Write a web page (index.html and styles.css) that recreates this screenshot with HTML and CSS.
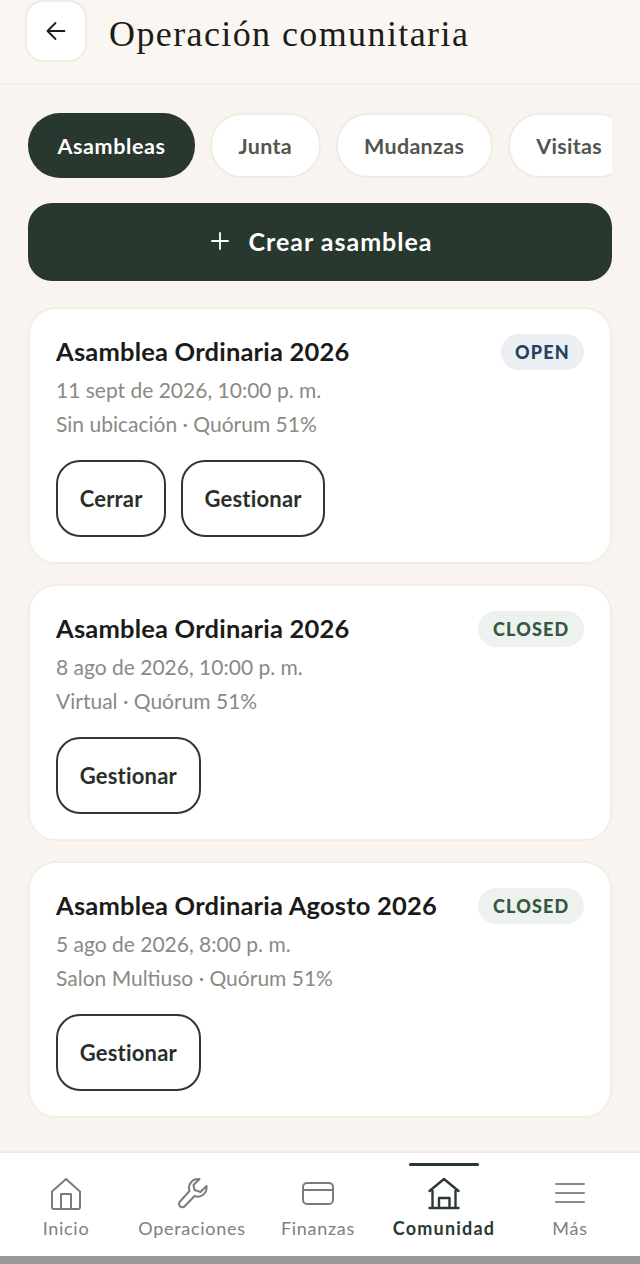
FILE: index.html
```html
<!DOCTYPE html>
<html>
<head>
    <title>Operación comunitaria</title>
    <meta name="viewport" content="width=device-width" />
    <link rel="stylesheet" href="styles.css">
</head>
<body>

<header class="top-bar">
    <button class="back-btn">
        <svg width="24" height="24" viewBox="0 0 24 24" fill="none" stroke="#1c1c1a" stroke-width="1.8" stroke-linecap="round" stroke-linejoin="round"><path d="M20.500 12H4M11.500 4 3.500 12l8 8"/></svg>
    </button>
    <h1>Operación comunitaria</h1>
</header>

<main class="content">
    <div class="tabs">
        <div class="tab active">Asambleas</div>
        <div class="tab">Junta</div>
        <div class="tab">Mudanzas</div>
        <div class="tab">Visitas</div>
    </div>

    <button class="create-btn">
        <svg width="20" height="20" viewBox="0 0 20 20" fill="none" stroke="#fff" stroke-width="1.8" stroke-linecap="round"><path d="M10 2v16M2 10h16"/></svg>
        <span>Crear asamblea</span>
    </button>

    <section class="card">
        <div class="card-head">
            <h2>Asamblea Ordinaria 2026</h2>
            <span class="badge open">OPEN</span>
        </div>
        <p class="meta date">11 sept de 2026, 10:00 p. m.</p>
        <p class="meta">Sin ubicación · Quórum 51%</p>
        <div class="actions">
            <button class="outline-btn">Cerrar</button>
            <button class="outline-btn">Gestionar</button>
        </div>
    </section>

    <section class="card">
        <div class="card-head">
            <h2>Asamblea Ordinaria 2026</h2>
            <span class="badge closed">CLOSED</span>
        </div>
        <p class="meta date">8 ago de 2026, 10:00 p. m.</p>
        <p class="meta">Virtual · Quórum 51%</p>
        <div class="actions">
            <button class="outline-btn">Gestionar</button>
        </div>
    </section>

    <section class="card">
        <div class="card-head">
            <h2>Asamblea Ordinaria Agosto 2026</h2>
            <span class="badge closed">CLOSED</span>
        </div>
        <p class="meta date">5 ago de 2026, 8:00 p. m.</p>
        <p class="meta">Salon Multiuso · Quórum 51%</p>
        <div class="actions">
            <button class="outline-btn">Gestionar</button>
        </div>
    </section>
</main>

<nav class="bottom-nav">
    <div class="nav-item">
        <svg width="34" height="34" viewBox="0 0 34 34" fill="none" stroke="#7b7b78" stroke-width="2" stroke-linecap="round" stroke-linejoin="round"><path d="M3 15.500 17 3l14 12.500V31a2 2 0 0 1-2 2H5a2 2 0 0 1-2-2z"/><path d="M12 33V18h10v15"/></svg>
        <span>Inicio</span>
    </div>
    <div class="nav-item">
        <svg width="34" height="34" viewBox="0 0 34 34" fill="none" stroke="#7b7b78" stroke-width="2" stroke-linecap="round" stroke-linejoin="round"><path d="M23 3a9 9 0 0 0-8.500 12L5 25.500a3.300 3.300 0 0 0 4.700 4.700L19.500 20A9 9 0 0 0 31.500 10l-6 6-6-2-1-5 6-6a9 9 0 0 0-1.500 0z"/></svg>
        <span>Operaciones</span>
    </div>
    <div class="nav-item">
        <svg width="34" height="34" viewBox="0 0 34 34" fill="none" stroke="#7b7b78" stroke-width="2" stroke-linecap="round" stroke-linejoin="round"><rect x="2" y="7" width="30" height="21" rx="4"/><path d="M2 14h30"/></svg>
        <span>Finanzas</span>
    </div>
    <div class="nav-item current">
        <svg width="34" height="34" viewBox="0 0 34 34" fill="none" stroke="#2a3a30" stroke-width="2.400" stroke-linecap="round" stroke-linejoin="round"><path d="M2.500 15 17 3l14.500 12M5.500 12.500V32M28.500 12.500V32M2.500 32h29M12 32V22h10.500v10"/></svg>
        <span>Comunidad</span>
    </div>
    <div class="nav-item">
        <svg width="34" height="34" viewBox="0 0 34 34" fill="none" stroke="#8b8b84" stroke-width="2" stroke-linecap="round"><path d="M3 8h28M3 17h28M3 26h28"/></svg>
        <span>Más</span>
    </div>
</nav>

<div class="system-bar"></div>

</body>
</html>
```

FILE: styles.css
```css
html, body {
    margin: 0;
    height: 1264px;
    overflow: hidden;
}

body {
    display: flex;
    flex-direction: column;
    background: #f9f4ef;
    font-family: Lato, sans-serif;
    color: #1c1c1a;
}

button {
    font-family: inherit;
    cursor: pointer;
}

.top-bar {
    height: 84px;
    flex: none;
    box-sizing: border-box;
    display: flex;
    align-items: flex-start;
    gap: 22px;
    padding-left: 25px;
    background: #faf7f2;
    border-bottom: 1px solid #f0ebe3;
}

.back-btn {
    width: 62px;
    height: 62px;
    padding: 0;
    display: flex;
    align-items: center;
    justify-content: center;
    background: #fff;
    border: 2px solid #f1ece3;
    border-radius: 18px;
}

.top-bar h1 {
    margin: 12px 0 0;
    font-family: "Liberation Serif", serif;
    font-size: 36px;
    line-height: 44px;
    font-weight: 400;
    letter-spacing: 1.400px;
}

.content {
    flex: 1;
    padding: 29px 28px 0;
}

.tabs {
    display: flex;
    gap: 15px;
    overflow: hidden;
    height: 65px;
}

.tab {
    flex: none;
    height: 65px;
    padding: 0 26.500px;
    box-sizing: border-box;
    display: flex;
    align-items: center;
    background: #fff;
    border: 2px solid #f1ece3;
    border-radius: 32px;
    font-size: 21.500px;
    letter-spacing: .3px;
    font-weight: 700;
    color: #55554f;
}

.tab.active {
    padding: 0 29.500px;
    background: #28382e;
    border: 0;
    letter-spacing: .6px;
    color: #fff;
}

.create-btn {
    width: 100%;
    height: 78px;
    margin-top: 25px;
    padding: 0 0 2px 3px;
    display: flex;
    align-items: center;
    justify-content: center;
    gap: 18px;
    background: #28382e;
    border: 0;
    border-radius: 24px;
    color: #fff;
    font-size: 25px;
    letter-spacing: 1px;
    font-weight: 700;
}

.card {
    height: 257px;
    box-sizing: border-box;
    margin-top: 20px;
    padding: 25px 26px 0;
    background: #fff;
    border: 2px solid #f3eee2;
    border-radius: 28px;
}

.create-btn + .card {
    margin-top: 26px;
}

.card-head {
    display: flex;
    align-items: flex-start;
    justify-content: space-between;
    height: 36px;
}

.card-head h2 {
    margin: 0;
    font-size: 25.500px;
    letter-spacing: .2px;
    line-height: 34px;
    font-weight: 700;
    color: #1b1b19;
}

.badge {
    height: 36px;
    box-sizing: border-box;
    padding: 0 14.500px;
    display: flex;
    align-items: center;
    border-radius: 18px;
    font-size: 18px;
    font-weight: 900;
    letter-spacing: 1.200px;
}

.badge.open {
    padding: 0 14px;
    background: #ebeff3;
    color: #27405f;
}

.badge.closed {
    background: #edf2ee;
    color: #35573f;
}

.meta {
    margin: 0;
    font-size: 21px;
    line-height: 34px;
    color: #8a8a85;
}

.date {
    margin-top: 3px;
}

.actions {
    display: flex;
    gap: 14.500px;
    margin-top: 19px;
}

.outline-btn {
    height: 77px;
    padding: 0 21.700px;
    background: #fff;
    border: 2.500px solid #2a3a30;
    border-radius: 24px;
    font-size: 22px;
    letter-spacing: .2px;
    font-weight: 700;
    color: #2a2f2b;
}

.bottom-nav {
    height: 105px;
    flex: none;
    box-sizing: border-box;
    display: flex;
    background: #fff;
    border-top: 2px solid #f0ebe3;
    padding: 0 7px 0 3px;
}

.nav-item {
    flex: 1;
    position: relative;
    display: flex;
    flex-direction: column;
    align-items: center;
    padding-top: 23px;
    font-size: 18px;
    letter-spacing: .7px;
    color: #80807c;
}

.nav-item span {
    margin-top: 6px;
    line-height: 24px;
}

.nav-item.current {
    color: #2a3a30;
    font-weight: 700;
    letter-spacing: 1.200px;
}

.nav-item.current:before {
    content: "";
    position: absolute;
    top: 10px;
    left: 28px;
    right: 28px;
    height: 3px;
    border-radius: 2px;
    background: #28382e;
}

.system-bar {
    height: 8px;
    flex: none;
    background: #999;
}
```
